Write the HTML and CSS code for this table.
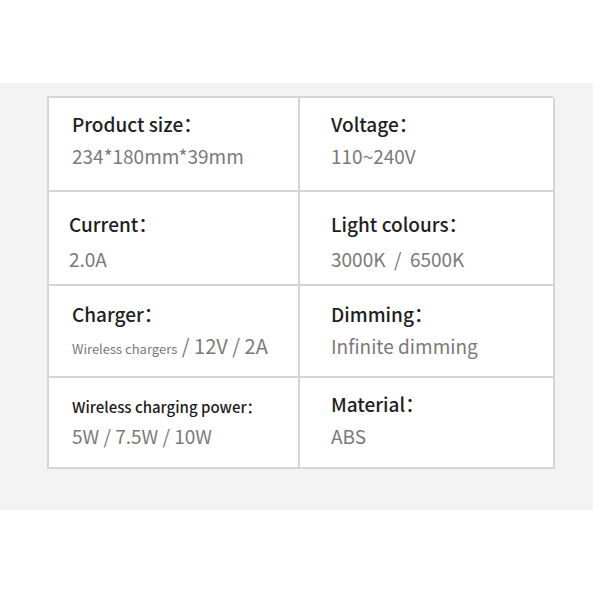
FILE: index.html
```html
<!DOCTYPE html>
<html>
<head>
<meta charset="utf-8">
<link rel="stylesheet" href="styles.css">
</head>
<body>
<div class="page">
  <section class="band">
    <div class="specs">
      <div class="cell cell-left r1">
        <div class="label">Product size：</div>
        <div class="value">234*180mm*39mm</div>
      </div>
      <div class="cell cell-right r1">
        <div class="label">Voltage：</div>
        <div class="value">110~240V</div>
      </div>
      <div class="cell cell-left cell-tight r2">
        <div class="label">Current：</div>
        <div class="value">2.0A</div>
      </div>
      <div class="cell cell-right r2">
        <div class="label">Light colours：</div>
        <div class="value">3000K&nbsp; / &nbsp;6500K</div>
      </div>
      <div class="cell cell-left r3">
        <div class="label">Charger：</div>
        <div class="value"><span class="small">Wireless chargers</span><span class="large"> / 12V / 2A</span></div>
      </div>
      <div class="cell cell-right r3">
        <div class="label">Dimming：</div>
        <div class="value">Infinite dimming</div>
      </div>
      <div class="cell cell-left r4">
        <div class="label label-small">Wireless charging power：</div>
        <div class="value">5W / 7.5W / 10W</div>
      </div>
      <div class="cell cell-right r4">
        <div class="label">Material：</div>
        <div class="value">ABS</div>
      </div>
    </div>
  </section>
</div>
</body>
</html>
```

FILE: styles.css
```css
html, body {
  margin: 0;
  padding: 0;
  background: #ffffff;
}

.page {
  width: 600px;
  height: 600px;
  padding-top: 83px;
  box-sizing: border-box;
  font-family: "Noto Sans CJK SC", "Noto Sans", sans-serif;
}

.band {
  width: 593px;
  height: 427px;
  background: #f3f3f3;
  padding: 13px 0 0 47px;
  box-sizing: border-box;
}

.specs {
  width: 506px;
  display: grid;
  grid-template-columns: 251px 255px;
  grid-template-rows: 94px 94px 92px 91px;
  background: #ffffff;
  border-top: 2px solid #d5d5d5;
  border-left: 2px solid #d5d5d5;
  box-sizing: border-box;
}

.cell {
  border-right: 2px solid #d5d5d5;
  border-bottom: 2px solid #d5d5d5;
  box-sizing: border-box;
  padding-top: 12px;
}

.cell-left {
  padding-left: 23px;
}

.cell-tight {
  padding-left: 20px;
}

.cell-right {
  padding-left: 31px;
}

.r2 {
  padding-top: 18px;
}

.r2 .value {
  margin-top: 3px;
}

.r3 {
  padding-top: 14px;
}

.label {
  font-size: 19px;
  font-weight: 500;
  line-height: 28px;
  color: #1e1e1e;
}

.label-small {
  font-size: 15px;
  line-height: 28px;
  margin-top: 3px;
}

.value {
  font-size: 19px;
  line-height: 36px;
  color: #7a7a7a;
  font-weight: 400;
}

.r4 .label-small + .value {
  margin-top: -3px;
}

.small {
  font-size: 13px;
}

.large {
  font-size: 20px;
}
```
